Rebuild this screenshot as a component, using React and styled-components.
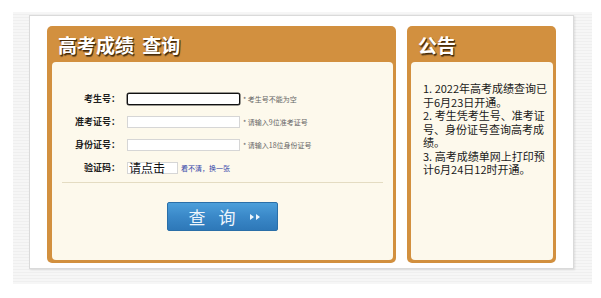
import styled, { createGlobalStyle } from "styled-components";

const GlobalStyle = createGlobalStyle`
  body {
    margin: 0;
    background: #fff;
    font-family: "Noto Sans CJK SC", "Noto Sans", sans-serif;
  }
`;

const Frame = styled.div`
  box-sizing: border-box;
  width: 579px;
  height: 272px;
  margin: 12px 0 0 13px;
  padding: 3px 18px 15px 16px;
  background: repeating-linear-gradient(
    to bottom,
    #f6f6f6 0,
    #f6f6f6 2px,
    #efefef 2px,
    #efefef 3px
  );
`;

const Card = styled.div`
  box-sizing: border-box;
  height: 254px;
  display: flex;
  gap: 11px;
  padding: 10px 17px 5px 17px;
  background: #fff;
  border: 1px solid #dadada;
  box-shadow: 1px 1px 2px rgba(0, 0, 0, 0.1);
`;

const Panel = styled.section`
  box-sizing: border-box;
  width: ${(p) => p.$width}px;
  display: flex;
  flex-direction: column;
  padding: 0 ${(p) => p.$right}px 3px ${(p) => p.$left}px;
  background: #d2903f;
  border-radius: 5px;
`;

const PanelTitle = styled.h2`
  margin: 0;
  height: 36px;
  display: flex;
  align-items: center;
  padding-left: ${(p) => p.$indent}px;
  font-size: 19px;
  font-weight: 700;
  color: #fff;
  word-spacing: 4px;
  text-shadow: 1px 1px 0 #4a2c08, 1px 2px 1px rgba(0, 0, 0, 0.5);
`;

const PanelBody = styled.div`
  flex: 1;
  background: #fdf9ec;
  border-radius: 4px;
`;

const Form = styled.div`
  padding-top: 25px;
`;

const Row = styled.div`
  height: 23px;
  display: flex;
  align-items: center;
`;

const Label = styled.label`
  width: 68px;
  margin-right: 7px;
  text-align: right;
  font-size: 9px;
  font-weight: 700;
  color: #1e1e1e;
`;

const Input = styled.div`
  box-sizing: border-box;
  width: ${(p) => p.$width || 113}px;
  height: 12px;
  background: #fff;
  border: 1px solid ${(p) => (p.$focused ? "#111" : "#d6d6d6")};
  border-radius: ${(p) => (p.$focused ? "2px" : "0")};
  box-shadow: ${(p) => (p.$focused ? "0 0 0 0.5px #333" : "none")};
  display: flex;
  align-items: center;
`;

const CaptchaText = styled.span`
  padding-left: 1px;
  font-size: 12px;
  line-height: 12px;
  color: #111;
  white-space: nowrap;
`;

const Hint = styled.span`
  margin-left: 3px;
  font-size: 7px;
  color: #666;
  white-space: nowrap;
`;

const Refresh = styled.a`
  margin-left: 3px;
  font-size: 7px;
  color: #3344a8;
  text-decoration: none;
  white-space: nowrap;
`;

const Divider = styled.hr`
  margin: 3px 10px 0 10px;
  border: 0;
  border-top: 1px solid #e4dcc2;
`;

const ButtonRow = styled.div`
  display: flex;
  justify-content: center;
  margin-top: 19px;
`;

const QueryButton = styled.button`
  box-sizing: border-box;
  width: 111px;
  height: 29px;
  display: flex;
  align-items: center;
  justify-content: center;
  gap: 13px;
  padding: 0 0 0 4px;
  border: 1px solid #2a6fa8;
  border-radius: 2px;
  background: linear-gradient(to bottom, #4c9fda 0%, #3a88c8 50%, #2e78b8 100%);
  color: #eef5fc;
  font-family: "Noto Sans CJK SC", sans-serif;
  font-size: 17px;
  cursor: pointer;
`;

const Notice = styled.div`
  width: 127px;
  padding: 20px 0 0 12px;
  font-size: 11px;
  line-height: 13.5px;
  color: #1a1a1a;
`;

const NoticeItem = styled.p`
  margin: 0;
`;

function Arrows() {
  return (
    <svg width="12" height="8" viewBox="0 0 12 8">
      <path d="M1 1 L5 4 L1 7 Z M7 1 L11 4 L7 7 Z" fill="#eef5fc" />
    </svg>
  );
}

const fields = [
  { label: "考生号：", hint: "* 考生号不能为空", focused: true },
  { label: "准考证号：", hint: "* 请输入9位准考证号" },
  { label: "身份证号：", hint: "* 请输入18位身份证号" },
];

export default function App() {
  return (
    <>
      <GlobalStyle />
      <Frame>
        <Card>
          <Panel $width={349} $left={5} $right={3}>
            <PanelTitle $indent={6}>高考成绩 查询</PanelTitle>
            <PanelBody>
              <Form>
                {fields.map((f) => (
                  <Row key={f.label}>
                    <Label>{f.label}</Label>
                    <Input $focused={f.focused} />
                    <Hint>{f.hint}</Hint>
                  </Row>
                ))}
                <Row>
                  <Label>验证码：</Label>
                  <Input $width={51}>
                    <CaptchaText>请点击</CaptchaText>
                  </Input>
                  <Refresh href="#">看不清，换一张</Refresh>
                </Row>
              </Form>
              <Divider />
              <ButtonRow>
                <QueryButton>
                  <span>查</span>
                  <span>询</span>
                  <Arrows />
                </QueryButton>
              </ButtonRow>
            </PanelBody>
          </Panel>
          <Panel $width={149} $left={4} $right={3}>
            <PanelTitle $indent={7}>公告</PanelTitle>
            <PanelBody>
              <Notice>
                <NoticeItem>1. 2022年高考成绩查询已于6月23日开通。</NoticeItem>
                <NoticeItem>2. 考生凭考生号、准考证号、身份证号查询高考成绩。</NoticeItem>
                <NoticeItem>3. 高考成绩单网上打印预计6月24日12时开通。</NoticeItem>
              </Notice>
            </PanelBody>
          </Panel>
        </Card>
      </Frame>
    </>
  );
}
